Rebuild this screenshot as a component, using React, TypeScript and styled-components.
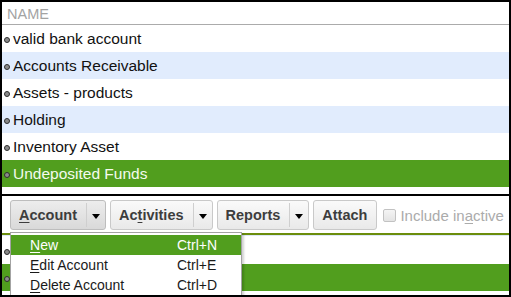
import styled, { createGlobalStyle, css } from "styled-components";

const GlobalStyle = createGlobalStyle`
  html, body {
    margin: 0;
    padding: 0;
    background: #fff;
  }
  * {
    box-sizing: border-box;
  }
`;

const accounts = [
  { name: "valid bank account", tone: "plain" },
  { name: "Accounts Receivable", tone: "alt" },
  { name: "Assets - products", tone: "plain" },
  { name: "Holding", tone: "alt" },
  { name: "Inventory Asset", tone: "plain" },
  { name: "Undeposited Funds", tone: "selected" },
] as const;

type Tone = "plain" | "alt" | "selected";

const menuItems = [
  { key: "N", rest: "ew", shortcut: "Ctrl+N", active: true },
  { key: "E", rest: "dit Account", shortcut: "Ctrl+E", active: false },
  { key: "D", rest: "elete Account", shortcut: "Ctrl+D", active: false },
];

export default function App() {
  return (
    <>
      <GlobalStyle />
      <StyledFrame>
        <StyledList>
          <StyledHeader>NAME</StyledHeader>
          {accounts.map((acc) => (
            <StyledRow key={acc.name} $tone={acc.tone}>
              <StyledBullet />
              {acc.name}
            </StyledRow>
          ))}
        </StyledList>

        <StyledToolbar>
          <StyledSplit $pressed>
            <StyledLabel>
              <span>
                <u>A</u>ccount
              </span>
            </StyledLabel>
            <StyledArrow />
          </StyledSplit>
          <StyledSplit>
            <StyledLabel>
              <span>
                Ac<u>t</u>ivities
              </span>
            </StyledLabel>
            <StyledArrow />
          </StyledSplit>
          <StyledSplit>
            <StyledLabel>Reports</StyledLabel>
            <StyledArrow />
          </StyledSplit>
          <StyledSplit>
            <StyledLabel>Attach</StyledLabel>
          </StyledSplit>
          <StyledCheck>
            <StyledBox />
            <span>
              Include in<u>a</u>ctive
            </span>
          </StyledCheck>
        </StyledToolbar>

        <StyledLowerList>
          <StyledRow $tone="plain">
            <StyledBullet />
          </StyledRow>
          <StyledRow $tone="selected">
            <StyledBullet />
          </StyledRow>
        </StyledLowerList>

        <StyledMenu>
          {menuItems.map((item) => (
            <StyledMenuItem key={item.key} $active={item.active}>
              <span>
                <u>{item.key}</u>
                {item.rest}
              </span>
              <span>{item.shortcut}</span>
            </StyledMenuItem>
          ))}
        </StyledMenu>
      </StyledFrame>
    </>
  );
}

const StyledFrame = styled.div`
  position: relative;
  display: flex;
  flex-direction: column;
  width: 511px;
  height: 297px;
  border: 2px solid #000;
  overflow: hidden;
  background: #fff;
  font-family: "Liberation Sans", Arial, sans-serif;
`;

const StyledList = styled.div`
  display: flex;
  flex-direction: column;
  padding-bottom: 7px;
  border-bottom: 2px solid #000;
`;

const StyledHeader = styled.div`
  height: 23px;
  padding: 1px 0 0 5px;
  display: flex;
  align-items: center;
  border-bottom: 1px solid #ababab;
  color: #a3a3a3;
  font-size: 14.5px;
`;

const rowTones = {
  plain: css`
    background: #fff;
    color: #111;
  `,
  alt: css`
    background: #e1ecfd;
    color: #111;
  `,
  selected: css`
    background: #519e1e;
    color: #f4fbee;
  `,
};

const StyledRow = styled.div<{ $tone: Tone }>`
  display: flex;
  align-items: center;
  height: 27px;
  font-size: 15.5px;
  white-space: nowrap;
  ${({ $tone }) => rowTones[$tone]}
`;

const StyledBullet = styled.span`
  width: 6px;
  height: 6px;
  margin: 3px 3px 0 2px;
  border-radius: 50%;
  border: 1px solid #2e2e2e;
  background: #8a8a8a;
  flex: none;
`;

const StyledToolbar = styled.div`
  display: flex;
  align-items: flex-start;
  gap: 4px;
  height: 37px;
  padding: 4px 0 0 8px;
  background: #fff;
`;

const StyledSplit = styled.div<{ $pressed?: boolean }>`
  display: flex;
  height: 30px;
  border: 1px solid #c9c9c9;
  border-radius: 3px;
  background: linear-gradient(#fafafa, #e9e9e9);
  color: #3d3d3d;
  font-size: 14.5px;
  font-weight: bold;

  ${({ $pressed }) =>
    $pressed &&
    css`
      border-color: #bdbdbd;
      background: linear-gradient(#ededed, #d9d9d9);
    `}
`;

const StyledLabel = styled.span`
  display: flex;
  align-items: center;
  padding: 0 9px 0 8px;

  u {
    text-decoration-thickness: 1px;
    text-underline-offset: 2px;
  }
`;

const StyledArrow = styled.span`
  position: relative;
  width: 19px;
  margin: 2px 0;
  border-left: 1px solid #cfcfcf;

  &::after {
    content: "";
    position: absolute;
    left: 5px;
    top: 11px;
    border-left: 4px solid transparent;
    border-right: 4px solid transparent;
    border-top: 5px solid #000;
  }
`;

const StyledCheck = styled.label`
  display: flex;
  align-items: center;
  gap: 4px;
  height: 30px;
  margin-left: 2px;
  color: #ababab;
  font-size: 15px;
  white-space: nowrap;

  u {
    text-underline-offset: 2px;
  }
`;

const StyledBox = styled.span`
  width: 13px;
  height: 13px;
  border: 1px solid #c2c2c2;
  border-radius: 2px;
  background: linear-gradient(#f4f4f4, #e4e4e4);
`;

const StyledLowerList = styled.div`
  display: flex;
  flex-direction: column;
  border-top: 2px solid #6b8d0c;
  padding-top: 2px;
  box-shadow: inset 0 1px 0 #dce8f6;
`;

const StyledMenu = styled.div`
  position: absolute;
  left: 8px;
  top: 230px;
  width: 232px;
  padding: 2px 0;
  border: 1px solid #a3a3a3;
  background: #fff;
  box-shadow: 2px 2px 2px rgba(0, 0, 0, 0.18);
  font-size: 14px;
`;

const StyledMenuItem = styled.div<{ $active?: boolean }>`
  display: grid;
  grid-template-columns: 147px auto;
  align-items: center;
  height: 20px;
  padding-left: 19px;
  color: ${({ $active }) => ($active ? "#fff" : "#1a1a1a")};
  background: ${({ $active }) => ($active ? "#519e1e" : "transparent")};

  u {
    text-underline-offset: 2px;
  }
`;
